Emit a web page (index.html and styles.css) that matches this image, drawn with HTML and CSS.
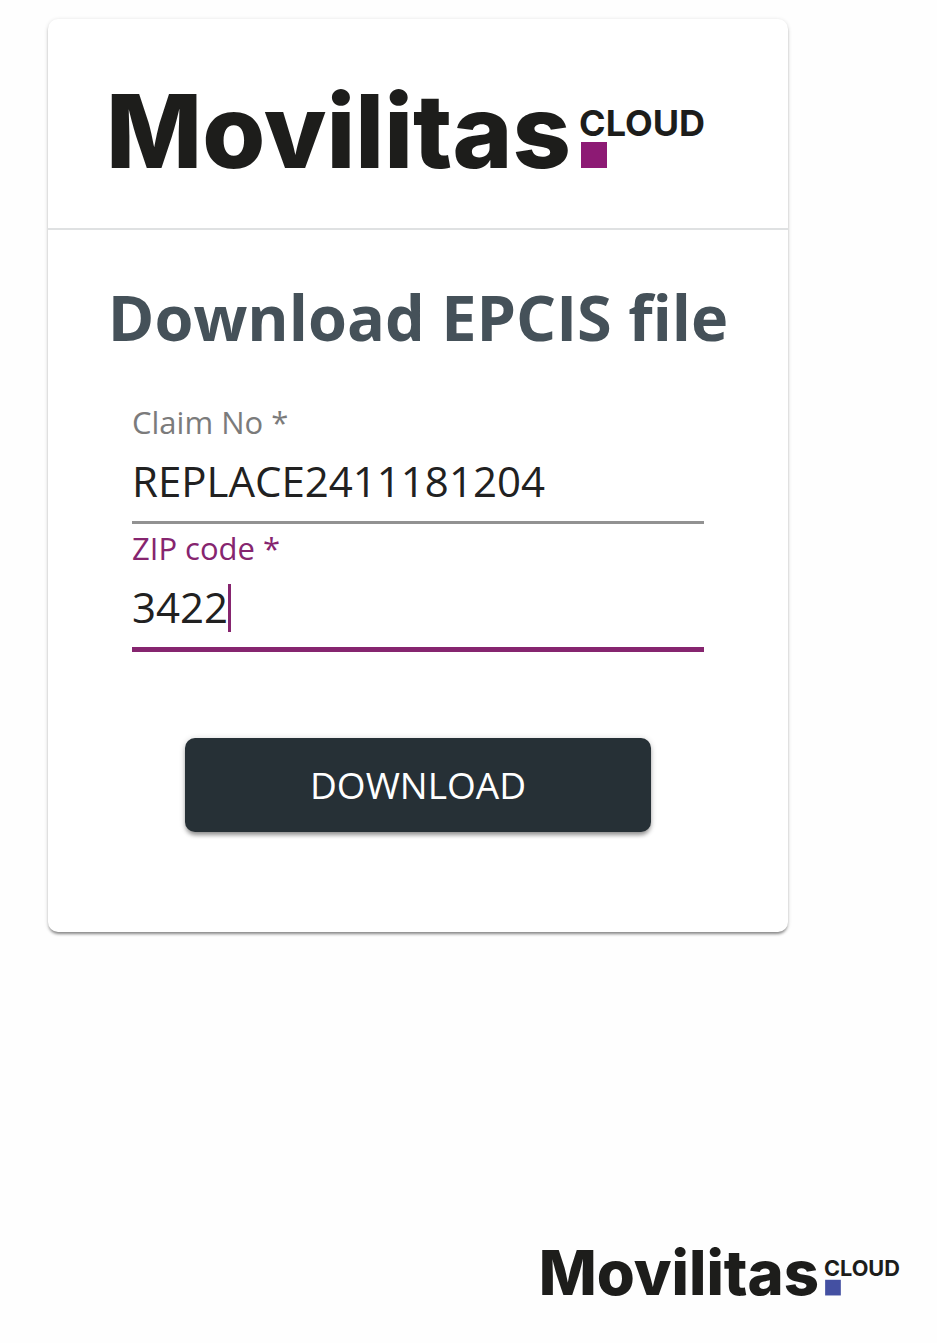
FILE: index.html
```html
<!DOCTYPE html>
<html lang="en">
<head>
<meta charset="utf-8">
<meta name="viewport" content="width=device-width, initial-scale=1">
<title>Download EPCIS file</title>
<link rel="stylesheet" href="styles.css">
</head>
<body class="page">
<main class="card">
  <header class="card-header">
    <svg class="logo" viewBox="0 0 600 88" role="img" aria-label="Movilitas Cloud">
      <text class="logo-name" x="-4" y="82">Movilitas</text>
      <text class="logo-sub" x="469" y="50">CLOUD</text>
      <rect class="logo-square" x="471" y="56" width="26" height="26"/>
    </svg>
  </header>
  <form class="form">
    <h1 class="title">Download EPCIS file</h1>
    <div class="fields">
      <div class="field">
        <label class="field-label" for="claim">Claim No *</label>
        <div class="field-box"><input class="field-input" id="claim" type="text" value="REPLACE2411181204"></div>
      </div>
      <div class="field field-active">
        <label class="field-label" for="zip">ZIP code *</label>
        <div class="field-box"><input class="field-input" id="zip" type="text" value="3422"><span class="caret"></span></div>
      </div>
    </div>
    <button class="download" type="button">DOWNLOAD</button>
  </form>
</main>
<footer class="footer">
  <svg class="logo logo-small" viewBox="0 0 600 88" role="img" aria-label="Movilitas Cloud">
    <text class="logo-name" x="-4" y="82">Movilitas</text>
    <text class="logo-sub" x="469" y="50">CLOUD</text>
    <rect class="logo-square logo-square-blue" x="471" y="56" width="26" height="26"/>
  </svg>
</footer>
</body>
</html>
```
FILE: styles.css
```css
* { box-sizing: border-box; }
.page {
  margin: 0;
  min-height: 100vh;
  padding: 19px 34px 44px 48px;
  display: flex;
  flex-direction: column;
  background: #fefefe;
  font-family: "Open Sans", sans-serif;
  color: #212121;
}
.card {
  width: 100%;
  max-width: 740px;
  padding-bottom: 100px;
  border-radius: 10px;
  background: #fff;
  box-shadow: 0 3px 3px -1px rgba(0,0,0,.4), 0 1px 4px rgba(0,0,0,.16);
}
.card-header {
  padding: 67px 78px 54px 62px;
  border-bottom: 2px solid #dfe1e2;
}
.logo { display: block; width: 100%; overflow: visible; }
.logo-name { font: 800 102px Inter, sans-serif; fill: #1d1d1b; }
.logo-sub { font: 700 36px Inter, sans-serif; fill: #1d1d1b; }
.logo-square { fill: #8d1a74; }
.logo-square-blue { fill: #4450a2; }
.form { display: flex; flex-direction: column; align-items: center; }
.title {
  margin: 43px 0 0;
  font-size: 63px;
  line-height: 88px;
  font-weight: 700;
  color: #455159;
  white-space: nowrap;
}
.fields { align-self: stretch; padding: 41px 84px 0; }
.field { height: 126px; }
.field-label { display: block; font-size: 31px; line-height: 40px; color: #7b7b7b; }
.field-box {
  position: relative;
  padding: 10px 0 13px;
  border-bottom: 3px solid #929292;
}
.field-input {
  display: block;
  width: 100%;
  height: 56px;
  padding: 0;
  border: 0;
  outline: 0;
  background: transparent;
  font: 42px "Open Sans", sans-serif;
  color: #212121;
}
.field-active .field-label { color: #86256f; }
.field-active .field-box { border-bottom: 5px solid #86256f; font-size: 42px; }
.caret {
  position: absolute;
  left: 4ch;
  top: 16px;
  width: 3px;
  height: 48px;
  background: #86256f;
}
.download {
  width: 63%;
  height: 94px;
  margin-top: 84px;
  padding: 0 0 2px;
  border: 0;
  border-radius: 10px;
  background: #263036;
  color: #fff;
  font: 37px "Open Sans", sans-serif;
  box-shadow: 0 4px 4px -1px rgba(0,0,0,.35), 0 1px 6px rgba(0,0,0,.2);
}
.footer { margin-top: auto; display: flex; justify-content: flex-end; }
.logo-small { width: 362px; }
```
